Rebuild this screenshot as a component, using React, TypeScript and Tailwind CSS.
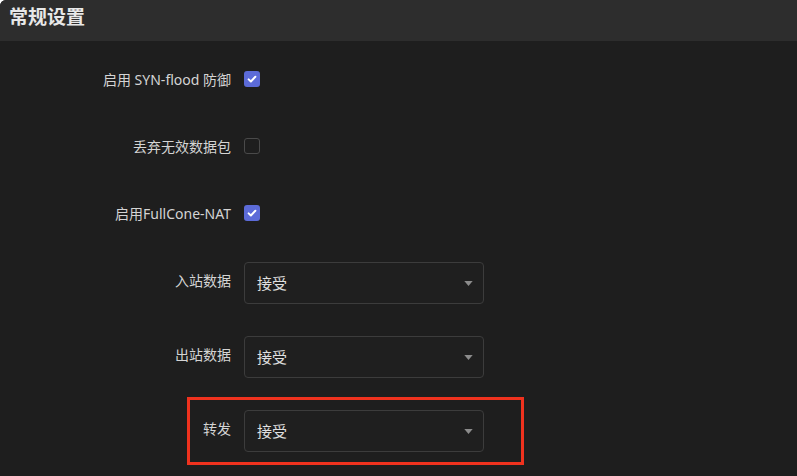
import type { ReactNode } from 'react'

const font = { fontFamily: '"Noto Sans", "Noto Sans CJK SC", sans-serif' }

function Check({ on }: { on: boolean }) {
  if (!on) {
    return <span className="block h-[16px] w-[16px] rounded-[3px] border border-[#4a4a4a] bg-[#1e1e1e]" />
  }
  return (
    <span className="flex h-[16px] w-[16px] items-center justify-center rounded-[3px] bg-[#5c6bd8]">
      <svg viewBox="0 0 16 16" className="h-[12px] w-[12px]" fill="none" stroke="#fff" strokeWidth="2.6" strokeLinecap="round" strokeLinejoin="round">
        <path d="M3.5 8.5l3 2.8 6-6.3" />
      </svg>
    </span>
  )
}

function Row({ label, children, select }: { label: string; children: ReactNode; select?: boolean }) {
  return (
    <div className={`flex ${select ? 'h-[42px] items-start' : 'h-[26px] items-center'}`}>
      <div className={`w-[231px] text-right text-[14px] text-[#d4d4d4] ${select ? 'pt-[8px]' : ''}`}>{label}</div>
      <div className="ml-[13px]">{children}</div>
    </div>
  )
}

function Select({ value }: { value: string }) {
  return (
    <div className="flex h-[42px] w-[240px] items-center justify-between rounded-[4px] border border-[#3c3c3c] bg-[#1f1f1f] pl-[12px] pr-[10px]">
      <span className="text-[15px] text-[#e0e0e0]">{value}</span>
      <svg viewBox="0 0 10 6" className="h-[5px] w-[9px]" fill="#8c8c8c">
        <path d="M0 0h10L5 6z" />
      </svg>
    </div>
  )
}

export default function App() {
  return (
    <div className="h-[476px] w-[797px] overflow-hidden rounded-tl-[6px] bg-[#1e1e1e]" style={font}>
      <header className="flex h-[41px] items-start bg-[#2d2d2d] pl-[9px] pt-[5px]">
        <h1 className="text-[19px] font-bold leading-[24px] text-[#e8e8e8]">常规设置</h1>
      </header>
      <main className="relative flex h-[435px] flex-col pt-[25px]">
        <Row label="启用 SYN-flood 防御">
          <Check on />
        </Row>
        <div className="h-[41px]" />
        <Row label="丢弃无效数据包">
          <Check on={false} />
        </Row>
        <div className="h-[41px]" />
        <Row label="启用FullCone-NAT">
          <Check on />
        </Row>
        <div className="h-[36px]" />
        <Row label="入站数据" select>
          <Select value="接受" />
        </Row>
        <div className="h-[32px]" />
        <Row label="出站数据" select>
          <Select value="接受" />
        </Row>
        <div className="h-[32px]" />
        <Row label="转发" select>
          <Select value="接受" />
        </Row>
        <div className="pointer-events-none absolute left-[187px] top-[356px] h-[68px] w-[337px] border-[3px] border-[#f0321e]" />
      </main>
    </div>
  )
}
